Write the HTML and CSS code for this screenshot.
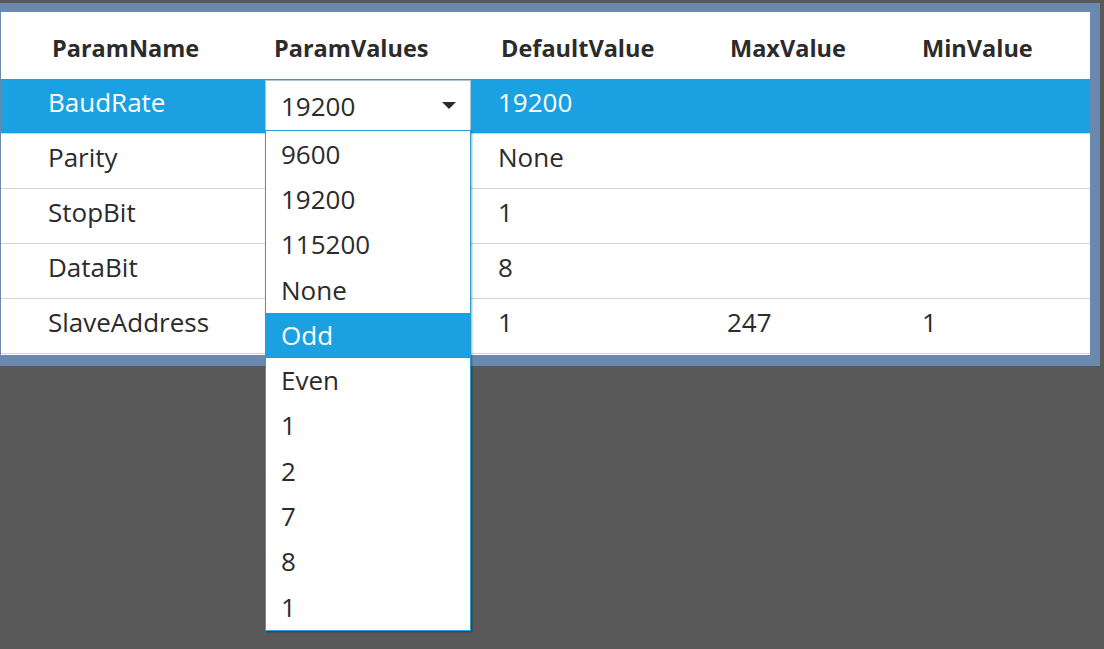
FILE: index.html
```html
<!DOCTYPE html>
<html lang="en">
<head>
    <meta charset="UTF-8">
    <title>Param grid</title>
    <link rel="stylesheet" href="styles.css">
</head>
<body>
    <div class="frame">
        <div class="grid">
            <div class="row head">
                <div class="cell c1">ParamName</div>
                <div class="cell c2">ParamValues</div>
                <div class="cell c3">DefaultValue</div>
                <div class="cell c4">MaxValue</div>
                <div class="cell c5">MinValue</div>
            </div>

            <div class="row selected">
                <div class="cell c1">BaudRate</div>
                <div class="cell c2 combo-cell">
                    <div class="combo">
                        <span>19200</span>
                        <span class="arrow"></span>
                    </div>
                    <!-- liste déroulante ouverte -->
                    <div class="popup">
                        <div class="item">9600</div>
                        <div class="item">19200</div>
                        <div class="item">115200</div>
                        <div class="item">None</div>
                        <div class="item hover">Odd</div>
                        <div class="item">Even</div>
                        <div class="item">1</div>
                        <div class="item">2</div>
                        <div class="item">7</div>
                        <div class="item">8</div>
                        <div class="item">1</div>
                    </div>
                </div>
                <div class="cell c3">19200</div>
                <div class="cell c4"></div>
                <div class="cell c5"></div>
            </div>

            <div class="row">
                <div class="cell c1">Parity</div>
                <div class="cell c2"></div>
                <div class="cell c3">None</div>
                <div class="cell c4"></div>
                <div class="cell c5"></div>
            </div>

            <div class="row">
                <div class="cell c1">StopBit</div>
                <div class="cell c2"></div>
                <div class="cell c3">1</div>
                <div class="cell c4"></div>
                <div class="cell c5"></div>
            </div>

            <div class="row">
                <div class="cell c1">DataBit</div>
                <div class="cell c2"></div>
                <div class="cell c3">8</div>
                <div class="cell c4"></div>
                <div class="cell c5"></div>
            </div>

            <div class="row">
                <div class="cell c1">SlaveAddress</div>
                <div class="cell c2"></div>
                <div class="cell c3">1</div>
                <div class="cell c4">247</div>
                <div class="cell c5">1</div>
            </div>
        </div>
    </div>
</body>
</html>
```

FILE: styles.css
```css
html, body {
    height: 100%;
}

body {
    margin: 0;
    min-height: 649px;
    background: #595959;
    font-family: "Open Sans", "Noto Sans", sans-serif;
    color: #2b2b2b;
}

.frame {
    position: relative;
    z-index: 1;
    margin-top: 3px;
    width: 1100px;
    height: 363px;
    box-sizing: border-box;
    padding: 9px 10px 11px 1px;
    background: #6b89ae;
}

.grid {
    background: #fff;
    height: 343px;
}

.row {
    display: grid;
    grid-template-columns: 264px 206px 229px 195px 1fr;
    height: 54px;
    border-bottom: 1px solid #d4d4d4;
}

.cell {
    display: flex;
    align-items: center;
    padding-left: 27px;
    padding-bottom: 8px;
    font-size: 26px;
    white-space: nowrap;
}

.cell.c1 {
    padding-left: 47px;
}

.cell.c2 {
    padding-left: 0;
}

.head {
    height: 67px;
    border-bottom: 0;
}

.head .cell {
    font-weight: bold;
    font-size: 23.5px;
    padding-bottom: 0;
    padding-top: 4px;
    padding-left: 30px;
}

.head .c1 {
    padding-left: 51px;
}

.head .c2 {
    padding-left: 9px;
}

.head .c5 {
    padding-left: 27px;
}

.selected {
    background: #1ba1e2;
    color: #fff;
    border-bottom-color: #d4d4d4;
}

.combo-cell {
    position: relative;
    align-items: flex-start;
    padding-bottom: 0;
}

.combo {
    margin-top: 1px;
    width: 206px;
    height: 50px;
    box-sizing: border-box;
    border: 1px solid #a9c6e0;
    border-bottom: 0;
    background: #fff;
    color: #2b2b2b;
    display: flex;
    align-items: center;
    justify-content: space-between;
    padding: 0 14px 0 15px;
    font-size: 26px;
}

.arrow {
    width: 0;
    height: 0;
    border-left: 7px solid transparent;
    border-right: 7px solid transparent;
    border-top: 7px solid #2b2b2b;
}

.popup {
    position: absolute;
    z-index: 5;
    left: 0;
    top: 51px;
    width: 206px;
    box-sizing: border-box;
    border: 1px solid #2a9fd8;
    background: #fff;
    color: #2b2b2b;
    box-shadow: 1px 1px 2px rgba(0, 0, 0, 0.35);
    padding-top: 1px;
}

.item {
    height: 45.3px;
    display: flex;
    align-items: center;
    padding-left: 15px;
    padding-bottom: 2px;
    box-sizing: border-box;
    font-size: 26px;
}

.item.hover {
    background: #1ba1e2;
    color: #fff;
}
```
